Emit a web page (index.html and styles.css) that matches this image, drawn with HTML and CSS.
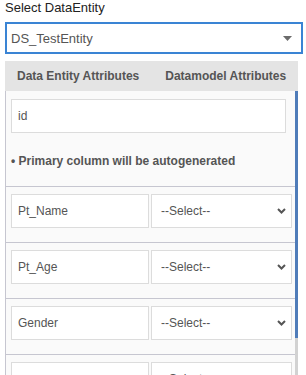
FILE: index.html
```html
<!DOCTYPE html>
<html>
<head>
  <title>Select DataEntity</title>
  <link rel="stylesheet" href="styles.css">
</head>
<body>

  <div class="entity-picker">
    <label class="picker-label">Select DataEntity</label>
    <div class="picker-box">
      <span class="picker-value">DS_TestEntity</span>
      <svg class="picker-caret" width="9" height="5" viewBox="0 0 9 5">
        <path d="M0 0 H9 L4.5 5 Z" fill="#6b6b6b"/>
      </svg>
    </div>
  </div>

  <div class="mapping">
    <div class="tabs">
      <div class="tab active">Data Entity Attributes</div>
      <div class="tab">Datamodel Attributes</div>
    </div>

    <div class="mapping-body">
      <div class="mapping-list">
        <div class="primary">
          <input class="field wide" type="text" value="id">
          <p class="note">&bull; Primary column will be autogenerated</p>
        </div>

        <div class="row">
          <input class="field" type="text" value="Pt_Name">
          <div class="select-wrap">
            <select class="field"><option>--Select--</option></select>
            <svg class="chevron" width="9" height="6" viewBox="0 0 9 6"><path d="M1 1 L4.5 4.5 L8 1" fill="none" stroke="#555" stroke-width="2"/></svg>
          </div>
        </div>

        <div class="row">
          <input class="field" type="text" value="Pt_Age">
          <div class="select-wrap">
            <select class="field"><option>--Select--</option></select>
            <svg class="chevron" width="9" height="6" viewBox="0 0 9 6"><path d="M1 1 L4.5 4.5 L8 1" fill="none" stroke="#555" stroke-width="2"/></svg>
          </div>
        </div>

        <div class="row">
          <input class="field" type="text" value="Gender">
          <div class="select-wrap">
            <select class="field"><option>--Select--</option></select>
            <svg class="chevron" width="9" height="6" viewBox="0 0 9 6"><path d="M1 1 L4.5 4.5 L8 1" fill="none" stroke="#555" stroke-width="2"/></svg>
          </div>
        </div>

        <div class="row">
          <input class="field" type="text" value="">
          <div class="select-wrap">
            <select class="field"><option>--Select--</option></select>
            <svg class="chevron" width="9" height="6" viewBox="0 0 9 6"><path d="M1 1 L4.5 4.5 L8 1" fill="none" stroke="#555" stroke-width="2"/></svg>
          </div>
        </div>
      </div>

      <!-- custom scrollbar -->
      <div class="scroll-rail">
        <div class="scroll-thumb"></div>
      </div>
    </div>
  </div>

</body>
</html>
```

FILE: styles.css
```css
body {
  margin: 0;
  padding: 0 5px;
  font-family: "Liberation Sans", Arial, sans-serif;
  background-color: #fff;
  overflow: hidden;
  height: 375px;
}

.entity-picker {
  width: 298px;
}

.picker-label {
  display: block;
  font-size: 13px;
  line-height: 15px;
  color: #222;
}

.picker-box {
  margin-top: 7px;
  height: 32px;
  box-sizing: border-box;
  border: 2px solid #3a84d4;
  padding: 0 9px 0 4px;
  display: flex;
  align-items: center;
  justify-content: space-between;
  background-color: #fff;
}

.picker-value {
  font-size: 13px;
  color: #555;
}

.mapping {
  width: 293px;
  margin-top: 7px;
}

.tabs {
  display: flex;
  height: 30px;
  align-items: center;
  background-color: #e4e4e4;
}

.tab {
  padding: 0 12px;
  font-size: 12px;
  font-weight: bold;
  color: #555;
  white-space: nowrap;
  cursor: pointer;
}

.tab + .tab {
  padding-left: 14px;
}

.mapping-body {
  display: flex;
  height: 284px;
  overflow: hidden;
}

.mapping-list {
  flex: 1;
  overflow: hidden;
  background-color: #fafafa;
  border-left: 1px solid #c6c6d0;
}

.scroll-rail {
  width: 3px;
  background-color: #d2d2d2;
}

.scroll-thumb {
  height: 247px;
  background-color: #4f7cb9;
}

.primary {
  padding: 8px 9px 18px 5px;
  border-bottom: 1px solid #c6c6d0;
}

.note {
  margin: 21px 0 0 0;
  font-size: 12px;
  line-height: 14px;
  font-weight: bold;
  color: #555;
}

.row {
  display: grid;
  grid-template-columns: 138px 141px;
  gap: 2px;
  padding: 7px 3px 14px 5px;
  border-bottom: 1px solid #c6c6d0;
}

.field {
  display: block;
  width: 100%;
  height: 34px;
  box-sizing: border-box;
  margin: 0;
  border: 1px solid #dcdcdc;
  background-color: #fff;
  padding: 0 6px;
  font-family: "Liberation Sans", Arial, sans-serif;
  font-size: 12px;
  color: #555;
  outline: none;
  border-radius: 0;
}

.field.wide {
  width: 275px;
}

.select-wrap {
  position: relative;
}

.select-wrap select {
  appearance: none;
  -webkit-appearance: none;
  padding-left: 9px;
}

.chevron {
  position: absolute;
  right: 6px;
  top: 14px;
  pointer-events: none;
}
```
